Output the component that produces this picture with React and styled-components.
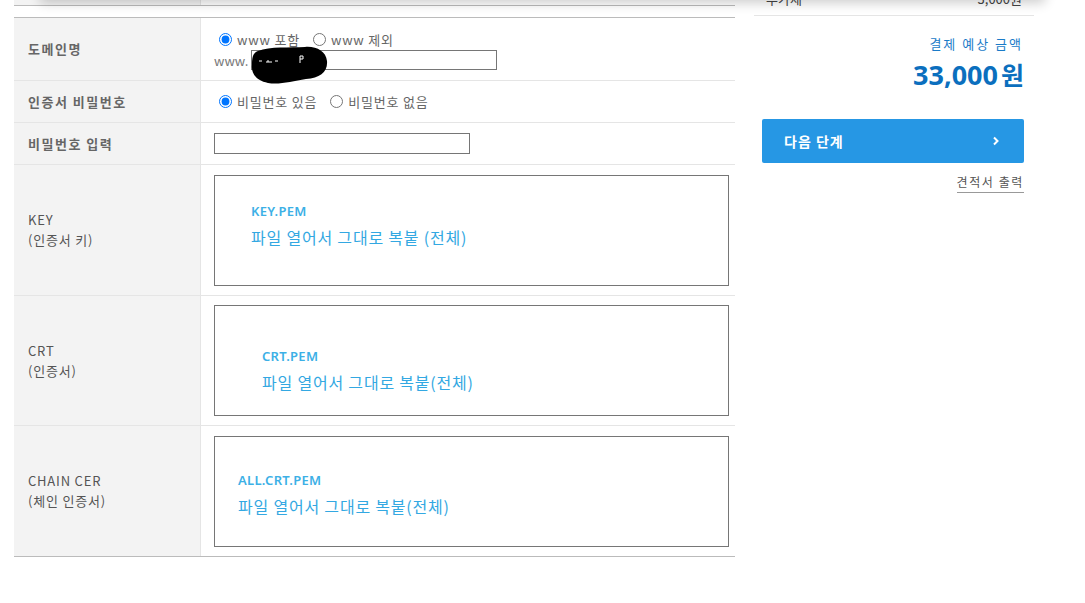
import styled, { createGlobalStyle } from "styled-components";

const GlobalStyle = createGlobalStyle`
  body {
    margin: 0;
    background: #fff;
    font-family: "Noto Sans CJK KR", "Noto Sans", sans-serif;
    color: #555;
  }
`;

const HeaderShadow = styled.div`
  position: fixed;
  top: -30px;
  left: 40px;
  right: 40px;
  height: 30px;
  box-shadow: 0 3px 12px rgba(0, 0, 0, 0.2);
  z-index: 5;
`;

const Page = styled.div`
  display: flex;
  align-items: flex-start;
  padding-left: 14px;
  gap: 19px;
  height: 603px;
  overflow: hidden;
`;

const Main = styled.div`
  width: 721px;
`;

const PrevTail = styled.div`
  display: grid;
  grid-template-columns: 187px 1fr;
  height: 5px;
  border-bottom: 1px solid #bbb;
  margin-bottom: 11px;
  div:first-child {
    background: #f3f3f3;
    border-right: 1px solid #e5e5e5;
  }
`;

const Table = styled.div`
  border-top: 1px solid #bbb;
  border-bottom: 1px solid #bbb;
`;

const Row = styled.div`
  display: grid;
  grid-template-columns: 187px 1fr;
  height: ${(p) => p.$h}px;
  border-bottom: 1px solid #e5e5e5;
  &:last-child {
    border-bottom: none;
  }
`;

const Label = styled.div`
  background: #f3f3f3;
  border-right: 1px solid #e5e5e5;
  display: flex;
  flex-direction: column;
  justify-content: center;
  padding-left: 14px;
  font-size: 13px;
  line-height: 20px;
  font-weight: ${(p) => (p.$bold ? 700 : 400)};
  letter-spacing: ${(p) => (p.$bold ? "1.5px" : "0.8px")};
  color: ${(p) => (p.$bold ? "#666" : "#555")};
`;

const Cell = styled.div`
  display: flex;
  flex-direction: column;
  justify-content: ${(p) => p.$justify || "center"};
  padding: ${(p) => p.$pad || "0"} 0 0 13px;
  position: relative;
`;

const RadioLine = styled.div`
  display: flex;
  align-items: center;
  height: 20px;
  font-size: 13px;
  letter-spacing: 0.8px;
  color: #666;
`;

const RadioLabel = styled.label`
  display: flex;
  align-items: center;
  margin-right: 8px;
`;

const Radio = styled.input.attrs({ type: "radio" })`
  width: 13px;
  height: 13px;
  margin: 0 5px 0 5px;
  accent-color: #0075ff;
`;

const UrlLine = styled.div`
  display: flex;
  align-items: center;
  margin-top: 1px;
  font-size: 13px;
  color: #777;
`;

const TextInput = styled.input`
  box-sizing: border-box;
  width: ${(p) => p.$w}px;
  height: ${(p) => p.$hgt}px;
  border: 1px solid #767676;
  margin: 0;
  padding: 0 4px;
  background: #fff;
`;

const Blob = styled.svg`
  position: absolute;
  left: 49px;
  top: 27px;
  width: 78px;
  height: 40px;
`;

const PemBox = styled.div`
  box-sizing: border-box;
  width: 515px;
  height: 111px;
  border: 1px solid #767676;
  padding: ${(p) => p.$top}px 0 0 ${(p) => p.$left}px;
  color: #33a8e2;
`;

const PemName = styled.div`
  font-family: "Noto Sans", "Noto Sans CJK KR", sans-serif;
  font-size: 13px;
  font-weight: 600;
  line-height: 16px;
  letter-spacing: 0.3px;
  color: #3cb0e6;
`;

const PemHint = styled.div`
  margin-top: 8px;
  font-size: 16px;
  line-height: 20px;
  letter-spacing: 0.8px;
`;

const Side = styled.div`
  width: 280px;
  display: flex;
  flex-direction: column;
  align-items: stretch;
`;

const PrevSummary = styled.div`
  margin-top: -11px;
  height: 26px;
  display: flex;
  justify-content: space-between;
  padding: 0 12px;
  font-size: 13px;
  line-height: 20px;
  color: #444;
  border-bottom: 1px solid #e5e5e5;
`;

const PayCaption = styled.div`
  margin-top: 18px;
  text-align: right;
  padding-right: 11px;
  font-size: 13px;
  line-height: 20px;
  color: #1a7bc8;
  letter-spacing: 2px;
`;

const PayAmount = styled.div`
  text-align: right;
  padding-right: 10px;
  font-family: "Noto Sans", "Noto Sans CJK KR", sans-serif;
  font-size: 27px;
  font-weight: 700;
  line-height: 32px;
  margin-top: 4px;
  color: #0b6fbe;
  span {
    font-family: "Noto Sans CJK KR", sans-serif;
    margin-left: 3px;
    font-size: 25px;
  }
`;

const NextButton = styled.button`
  margin: 28px 10px 0 8px;
  height: 44px;
  border: none;
  border-radius: 2px;
  background: #2697e4;
  color: #fff;
  display: flex;
  align-items: center;
  justify-content: space-between;
  padding: 0 24px 0 22px;
  font-family: "Noto Sans CJK KR", sans-serif;
  font-size: 14px;
  font-weight: 700;
  letter-spacing: 1px;
  cursor: pointer;
`;

const Estimate = styled.div`
  align-self: flex-end;
  margin: 10px 10px 0 0;
  font-size: 12px;
  line-height: 18px;
  letter-spacing: 1.6px;
  color: #555;
  border-bottom: 1px solid #999;
  padding-bottom: 1px;
`;

const pems = [
  { key: "KEY", sub: "(인증서 키)", name: "KEY.PEM", hint: "파일 열어서 그대로 복붙 (전체)", top: 27, left: 36, h: 130 },
  { key: "CRT", sub: "(인증서)", name: "CRT.PEM", hint: "파일 열어서 그대로 복붙(전체)", top: 42, left: 47, h: 129 },
  { key: "CHAIN CER", sub: "(체인 인증서)", name: "ALL.CRT.PEM", hint: "파일 열어서 그대로 복붙(전체)", top: 35, left: 23, h: 130 },
];

export default function App() {
  return (
    <>
      <GlobalStyle />
      <HeaderShadow />
      <Page>
        <Main>
          <PrevTail>
            <div />
            <div />
          </PrevTail>
          <Table>
            <Row $h={62}>
              <Label $bold>도메인명</Label>
              <Cell $justify="flex-start" $pad="11px">
                <RadioLine>
                  <RadioLabel>
                    <Radio name="www" defaultChecked />
                    www 포함
                  </RadioLabel>
                  <RadioLabel>
                    <Radio name="www" />
                    www 제외
                  </RadioLabel>
                </RadioLine>
                <UrlLine>
                  www.&nbsp;
                  <TextInput $w={246} $hgt={20} />
                </UrlLine>
                <Blob viewBox="0 0 78 40">
                  <path
                    d="M8 6 C20 1 40 3 55 2 C66 1 76 6 77 16 C78 27 70 33 56 34 C42 36 30 40 18 38 C7 36 1 29 2 20 C2 12 3 8 8 6 Z"
                    fill="#000"
                  />
                  <path d="M9 16 h3 M16 17 h6 M18 15 v2 M25 16 h3" stroke="#fff" strokeWidth="1" />
                  <path d="M50 11 v7 M50 11 h3 v3 h-3" stroke="#fff" strokeWidth="1" fill="none" />
                </Blob>
              </Cell>
            </Row>
            <Row $h={41}>
              <Label $bold>인증서 비밀번호</Label>
              <Cell>
                <RadioLine>
                  <RadioLabel>
                    <Radio name="pw" defaultChecked />
                    비밀번호 있음
                  </RadioLabel>
                  <RadioLabel>
                    <Radio name="pw" />
                    비밀번호 없음
                  </RadioLabel>
                </RadioLine>
              </Cell>
            </Row>
            <Row $h={41}>
              <Label $bold>비밀번호 입력</Label>
              <Cell>
                <TextInput type="password" $w={256} $hgt={21} />
              </Cell>
            </Row>
            {pems.map((p) => (
              <Row key={p.key} $h={p.h}>
                <Label>
                  <div>{p.key}</div>
                  <div>{p.sub}</div>
                </Label>
                <Cell>
                  <PemBox $top={p.top} $left={p.left}>
                    <PemName>{p.name}</PemName>
                    <PemHint>{p.hint}</PemHint>
                  </PemBox>
                </Cell>
              </Row>
            ))}
          </Table>
        </Main>
        <Side>
          <PrevSummary>
            <span>부가세</span>
            <span>3,000원</span>
          </PrevSummary>
          <PayCaption>결제 예상 금액</PayCaption>
          <PayAmount>
            33,000<span>원</span>
          </PayAmount>
          <NextButton>
            다음 단계
            <svg width="8" height="10" viewBox="0 0 8 10">
              <path d="M2 1.5 L5.5 5 L2 8.5" stroke="#fff" strokeWidth="2" fill="none" />
            </svg>
          </NextButton>
          <Estimate>견적서 출력</Estimate>
        </Side>
      </Page>
    </>
  );
}
